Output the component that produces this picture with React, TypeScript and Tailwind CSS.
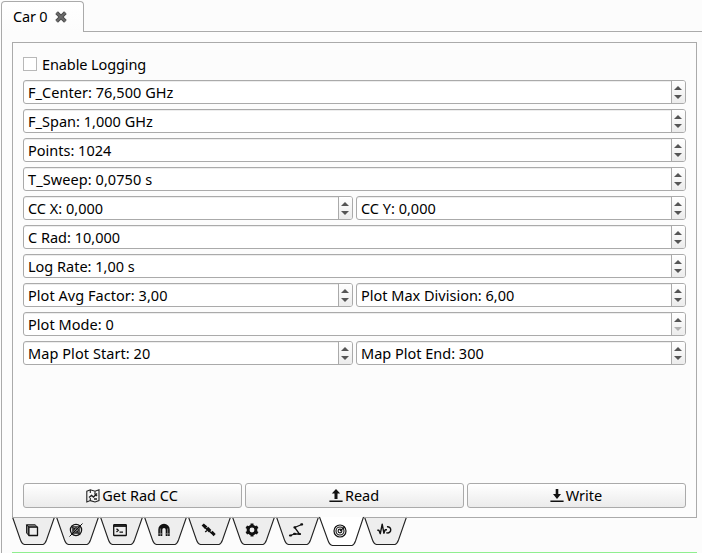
import type { ReactNode } from 'react';

function Arrow({ up, dim }: { up?: boolean; dim?: boolean }) {
  return (
    <svg width="8" height="4" viewBox="0 0 8 4" className={dim ? 'text-[#b0b0b0]' : 'text-[#555]'}>
      <path d={up ? 'M4 0L8 4H0Z' : 'M0 0H8L4 4Z'} fill="currentColor" />
    </svg>
  );
}

function Spin({ text, tracking = '', dim }: { text: string; tracking?: string; dim?: boolean }) {
  return (
    <div className="flex h-6 flex-1 overflow-hidden rounded-[3px] border border-[#aaa] bg-white shadow-[inset_0_1px_0_#ededed]">
      <div className="flex flex-1 items-center pt-px pl-1 whitespace-nowrap">
        <span className={tracking}>{text}</span>
      </div>
      <div className="flex w-[14px] flex-col items-start gap-[5px] border-l border-[#aaa] bg-gradient-to-b from-white to-[#ececec] pt-[5px] pl-[2px]">
        <Arrow up />
        <Arrow dim={dim} />
      </div>
    </div>
  );
}

function Row({ children }: { children: ReactNode }) {
  return <div className="flex h-6 gap-[3px]">{children}</div>;
}

function Button({ icon, text, tracking = '' }: { icon: ReactNode; text: string; tracking?: string }) {
  return (
    <button className="flex h-[25px] flex-1 items-center justify-center gap-[2px] rounded-[3px] border border-[#aaa] bg-gradient-to-b from-white to-[#ebebeb] pr-px">
      {icon}
      <span className={tracking}>{text}</span>
    </button>
  );
}

const icons: ReactNode[] = [
  <g stroke="#111" strokeLinejoin="round">
    <path d="M14.6 7.8l2.3 2.4h8.6l-2.4-2.4z" fill="#999" strokeWidth="1" />
    <path d="M14.6 7.8v8.2l2.3 2.5v-8.3z" fill="#888" strokeWidth="1" />
    <path d="M16.9 10.2h8.6v8.3h-8.6z" fill="#eee" strokeWidth="1.3" />
  </g>,
  <g fill="none" stroke="#111" strokeWidth="1.3">
    <circle cx="20" cy="13" r="5.6" />
    <circle cx="20" cy="13" r="2.2" />
    <path d="M13.5 19.5l13-13M15.7 9.3l8.4 8.2M16.8 9.8h6.4v6.4h-6.4z" strokeWidth="1" />
  </g>,
  <g fill="none" stroke="#111" strokeWidth="1.3">
    <rect x="13.7" y="7.7" width="12.6" height="10.8" rx=".6" />
    <path d="M13.7 9h12.6" strokeWidth="1.8" />
    <path d="M16.5 11.7l1.8 1.6-1.8 1.6M19.5 15.2h3.5" />
  </g>,
  <g>
    <path d="M14.3 19v-6.5a5.7 5.7 0 0 1 11.4 0V19h-4v-6.2a1.7 1.7 0 0 0-3.4 0V19z" fill="#111" />
    <path d="M14.3 16.8h4M21.7 16.8h4M16.3 11.5V19M23.7 11.5V19" stroke="#aaa" strokeWidth=".7" />
  </g>,
  <g fill="#111">
    <path d="M13.6 8.4l2.2-2 3.6 3.2-2.4 2.3zM22.3 15.7l2.2-2 3.2 3.4-2.1 2.1z" />
    <path d="M17.6 12l2.6-2.2 3.2 3.2-2.4 2.4z" />
    <path d="M17 10.5l7 6M19 13.5l-1.8 1.6" stroke="#111" strokeWidth="1.3" />
  </g>,
  <g fill="none" stroke="#111">
    <circle cx="20" cy="13" r="3.9" strokeWidth="2.9" />
    <path d="M20 6.5v2.4M20 17.1v2.4M14.3 9.7l2 1.2M23.7 15.1l2 1.2M14.3 16.3l2-1.2M23.7 10.9l2-1.2" strokeWidth="3" />
  </g>,
  <g fill="none" stroke="#111" strokeWidth="1.3">
    <path d="M14.5 18.5l4-1.6 5 .1-4.8-6.5 7-3" />
    <path d="M14 18.5h1M18.2 16.9h.8M23.2 17h.8M18.5 10.4h.6M25.3 7.4h.8" strokeWidth="2.2" strokeLinecap="round" />
  </g>,
  <g fill="none" stroke="#111">
    <circle cx="20" cy="14" r="6" strokeWidth="1.2" />
    <circle cx="20" cy="14" r="4" strokeWidth="1.1" />
    <circle cx="20" cy="14" r="1.9" strokeWidth="1.1" />
    <path d="M20 14l4.7-4" strokeWidth="1.2" />
  </g>,
  <g fill="none" stroke="#111" strokeWidth="1.4" strokeLinejoin="round">
    <path d="M13.3 13.3h1.6l1.4 3.4 1.9-9.5 1.7 9 1.3-3.4h1.8" />
    <path d="M23 9.8a3.1 3.1 0 1 1 .2 6.1h-1" strokeWidth="1.4" />
  </g>,
];

function BottomTab({ icon, active }: { icon: ReactNode; active: boolean }) {
  return (
    <svg width="44" height="29" viewBox="0 0 44 29" className="shrink-0 overflow-visible">
      <path
        d={active ? 'M-.5 0L8 23.5Q9.5 28 12.5 28.5H32Q34 28 35.5 24L43.5 0' : 'M.5 0L8.3 22.5Q9.8 27 12.5 27.5H31Q33 27 34.5 23L42.5 0'}
        fill={active ? '#fff' : '#eee'}
        stroke="#222"
        strokeWidth="1.1"
      />
      {!active && <path d="M0 .5H44" stroke="#aaa" />}
      {icon}
    </svg>
  );
}

export default function App() {
  return (
    <div className="flex h-[553px] w-[702px] flex-col overflow-hidden bg-[#fcfcfc] pl-px font-['Noto_Sans',sans-serif] text-[14.5px] leading-none text-black">
      <div className="flex h-8 shrink-0 items-end">
        <div className="mt-px flex h-[31px] w-[83px] items-center gap-[7px] rounded-t-[4px] border border-b-0 border-[#aaa] bg-gradient-to-b from-white to-[#fcfcfc] pl-[11px]">
          <span className="pb-px tracking-[-0.2px] whitespace-nowrap">Car 0</span>
          <svg width="14" height="14" viewBox="0 0 14 14" className="shrink-0">
            <path d="M2.6 2.6l8.8 8.8M11.4 2.6l-8.8 8.8" stroke="#4c4c4c" strokeWidth="3.8" />
            <path d="M2.6 2.6l8.8 8.8M11.4 2.6l-8.8 8.8" stroke="#6c6c6c" strokeWidth="1.8" />
          </svg>
        </div>
        <div className="h-px flex-1 bg-[#aaa]" />
      </div>
      <div className="flex flex-1 flex-col border-l border-[#aaa] pt-[10px] pr-[5px] pl-[10px]">
        <div className="flex h-[476px] shrink-0 flex-col border border-[#aaa] px-[10px] pt-[14px] pb-[9px]">
          <label className="flex h-[14px] items-center gap-[5px]">
            <span className="size-[14px] border border-[#b8b8b8] bg-white" />
            <span className="pt-px tracking-[-0.1px]">Enable Logging</span>
          </label>
          <div className="mt-[9px] flex flex-col gap-[5px]">
            <Row>
              <Spin text="F_Center: 76,500 GHz" tracking="tracking-[0.04px]" />
            </Row>
            <Row>
              <Spin text="F_Span: 1,000 GHz" tracking="tracking-[0.02px]" />
            </Row>
            <Row>
              <Spin text="Points: 1024" />
            </Row>
            <Row>
              <Spin text="T_Sweep: 0,0750 s" tracking="tracking-[0.08px]" />
            </Row>
            <Row>
              <Spin text="CC X: 0,000" />
              <Spin text="CC Y: 0,000" />
            </Row>
            <Row>
              <Spin text="C Rad: 10,000" />
            </Row>
            <Row>
              <Spin text="Log Rate: 1,00 s" />
            </Row>
            <Row>
              <Spin text="Plot Avg Factor: 3,00" tracking="tracking-[0.04px]" />
              <Spin text="Plot Max Division: 6,00" />
            </Row>
            <Row>
              <Spin text="Plot Mode: 0" tracking="tracking-[0.05px]" dim />
            </Row>
            <Row>
              <Spin text="Map Plot Start: 20" tracking="tracking-[0.07px]" />
              <Spin text="Map Plot End: 300" />
            </Row>
          </div>
          <div className="mt-auto flex gap-[3px]">
            <Button
              text="Get Rad CC"
              icon={
                <svg width="14" height="14" viewBox="0 0 14 14" fill="none" stroke="#222" strokeWidth="1.1">
                  <path d="M.8 2.2l3.5-1.4 4.7 1.4 4-1.4v10.8l-4 1.4-4.7-1.4L.8 13zM4.3 1v3M9 2.5v2M4.3 9v2.6" />
                  <path d="M3 8.5l2.5-2L7.5 8 11 4.5M8.5 4.5L11 7M8 10h3" strokeWidth="1.4" />
                </svg>
              }
            />
            <Button
              text="Read"
              icon={
                <svg width="14" height="14" viewBox="0 0 14 14" fill="#111">
                  <path d="M7 0l4.2 4.5H8.5V10h-3V4.5H2.8zM.4 11.6h13.2V13H.4z" />
                </svg>
              }
            />
            <Button
              text="Write"
              icon={
                <svg width="14" height="14" viewBox="0 0 14 14" fill="#111">
                  <path d="M5.7 0h2.6v5H11l-4 5-4-5h2.7zM.4 11.6h13.2V13H.4z" />
                </svg>
              }
            />
          </div>
        </div>
        <div className="-mt-px flex h-[29px] shrink-0">
          {icons.map((icon, i) => (
            <BottomTab key={i} icon={icon} active={i === 7} />
          ))}
        </div>
        <div className="mt-auto h-px bg-[#90ee90]" />
      </div>
    </div>
  );
}
